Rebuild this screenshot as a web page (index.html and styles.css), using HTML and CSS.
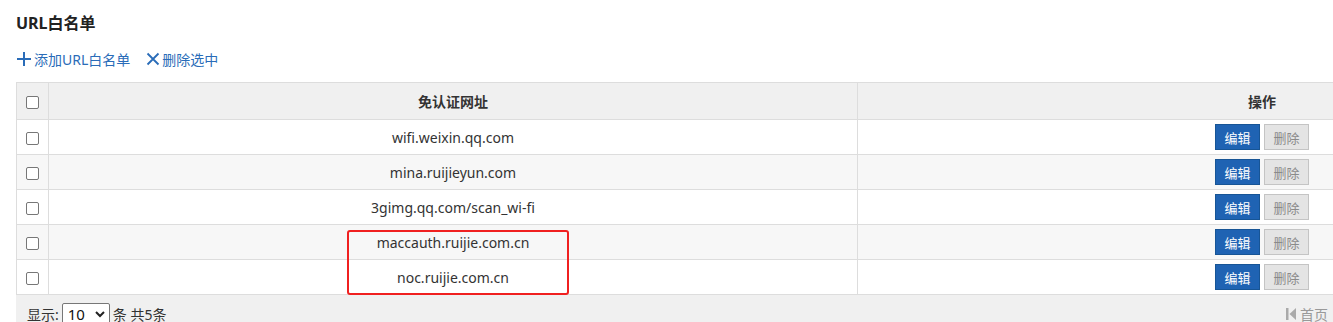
FILE: index.html
```html
<!DOCTYPE html>
<html lang="zh-CN">
<head>
    <meta charset="UTF-8">
    <title>URL白名单</title>
    <link rel="stylesheet" href="styles.css">
</head>
<body>
    <div class="page">
        <h2 class="title">URL白名单</h2>

        <div class="toolbar">
            <a class="tool">
                <svg width="16" height="16" viewBox="0 0 16 16"><path d="M8 1v14M1 8h14" stroke="#2a6cb8" stroke-width="2"/></svg>
                添加URL白名单
            </a>
            <a class="tool">
                <svg width="14" height="14" viewBox="0 0 14 14"><path d="M1.5 1.5l11 11M12.5 1.5l-11 11" stroke="#2a6cb8" stroke-width="1.8"/></svg>
                删除选中
            </a>
        </div>

        <div class="grid-wrap">
            <table class="grid">
                <thead>
                    <tr>
                        <th class="chk"><span class="box"></span></th>
                        <th>免认证网址</th>
                        <th>操作</th>
                    </tr>
                </thead>
                <tbody>
                    <tr>
                        <td class="chk"><span class="box"></span></td>
                        <td>wifi.weixin.qq.com</td>
                        <td><button class="btn edit">编辑</button><button class="btn del">删除</button></td>
                    </tr>
                    <tr>
                        <td class="chk"><span class="box"></span></td>
                        <td>mina.ruijieyun.com</td>
                        <td><button class="btn edit">编辑</button><button class="btn del">删除</button></td>
                    </tr>
                    <tr>
                        <td class="chk"><span class="box"></span></td>
                        <td>3gimg.qq.com/scan_wi-fi</td>
                        <td><button class="btn edit">编辑</button><button class="btn del">删除</button></td>
                    </tr>
                    <tr>
                        <td class="chk"><span class="box"></span></td>
                        <td>maccauth.ruijie.com.cn</td>
                        <td><button class="btn edit">编辑</button><button class="btn del">删除</button></td>
                    </tr>
                    <tr>
                        <td class="chk"><span class="box"></span></td>
                        <td>noc.ruijie.com.cn</td>
                        <td><button class="btn edit">编辑</button><button class="btn del">删除</button></td>
                    </tr>
                </tbody>
            </table>

            <div class="footer">
                <div class="size">
                    显示:
                    <span class="select">10 <svg width="10" height="7" viewBox="0 0 10 7"><path d="M1 1l4 4 4-4" fill="none" stroke="#222" stroke-width="2"/></svg></span>
                    条 共5条
                </div>
                <div class="pager">
                    <svg width="10" height="12" viewBox="0 0 10 12"><rect x="0" y="0" width="2.5" height="12" fill="#aaa"/><path d="M10 0v12L3.5 6z" fill="#aaa"/></svg>
                    首页
                </div>
            </div>

            <div class="mark"></div>
        </div>
    </div>
</body>
</html>
```

FILE: styles.css
```css
body {
    margin: 0;
    font-family: "Noto Sans", "Noto Sans CJK SC", sans-serif;
    color: #333;
    overflow: hidden;
}
.page {
    padding: 12px 0 0 16px;
}
.title {
    margin: 0;
    font-size: 16px;
    font-weight: bold;
    line-height: 22px;
    color: #222;
}
.toolbar {
    display: flex;
    gap: 16px;
    margin-top: 16px;
    height: 18px;
    align-items: center;
}
.tool {
    display: flex;
    align-items: center;
    gap: 2px;
    font-size: 14px;
    color: #2a6cb8;
    cursor: pointer;
}
.grid-wrap {
    position: relative;
    margin-top: 14px;
    width: 1651px;
}
.grid {
    width: 100%;
    border-collapse: collapse;
    table-layout: fixed;
}
.grid th, .grid td {
    border: 1px solid #ddd;
    text-align: center;
    font-size: 14px;
    padding: 0;
}
.grid th {
    height: 36px;
    background-color: #f0f0f0;
    font-weight: bold;
    color: #333;
}
.grid td {
    height: 34px;
}
.grid tbody tr:nth-child(even) {
    background-color: #f7f7f7;
}
.grid .chk {
    width: 31px;
}
.box {
    display: inline-block;
    width: 11px;
    height: 11px;
    border: 1px solid #777;
    border-radius: 2px;
    background: #fff;
    vertical-align: middle;
}
.btn {
    font-family: inherit;
    font-size: 13px;
    width: 45px;
    height: 26px;
    padding: 0;
    margin: 0 2px;
    vertical-align: middle;
    cursor: pointer;
}
.edit {
    background-color: #1f63b3;
    border: 1px solid #175596;
    color: #fff;
}
.del {
    background-color: #e4e4e4;
    border: 1px solid #c4c4c4;
    color: #8a8a8a;
}
.footer {
    display: flex;
    justify-content: space-between;
    background-color: #f0f0f0;
    height: 40px;
    padding: 9px 0 0 11px;
    box-sizing: border-box;
    font-size: 14px;
}
.size {
    display: flex;
    align-items: center;
    gap: 3px;
    height: 20px;
}
.select {
    display: inline-flex;
    align-items: center;
    justify-content: space-between;
    width: 48px;
    height: 22px;
    box-sizing: border-box;
    padding: 0 4px 0 5px;
    border: 1px solid #777;
    border-radius: 2px;
    background: #fff;
    font-size: 15px;
    color: #111;
}
.pager {
    display: flex;
    align-items: center;
    gap: 4px;
    height: 20px;
    margin-right: 339px;
    color: #999;
}
.mark {
    position: absolute;
    left: 331px;
    top: 148px;
    width: 218px;
    height: 61px;
    border: 2px solid #f02020;
    border-radius: 3px;
}
```
